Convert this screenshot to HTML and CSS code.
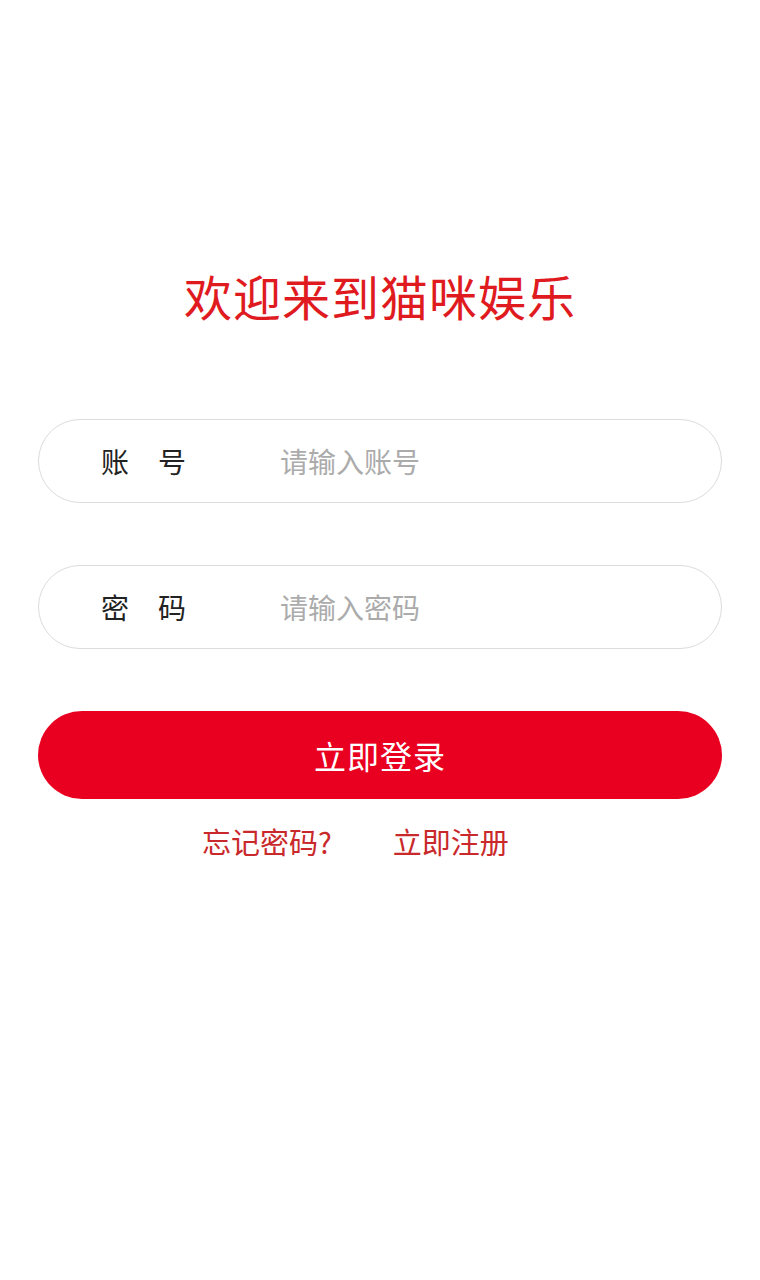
FILE: index.html
```html
<!DOCTYPE html>
<html lang="zh-CN">
<head>
<meta charset="utf-8">
<title>欢迎来到猫咪娱乐</title>
<link rel="stylesheet" href="styles.css">
</head>
<body>
<main class="page">
  <h1 class="title">欢迎来到猫咪娱乐</h1>
  <form class="form">
    <label class="field">
      <span class="label"><span>账</span><span>号</span></span>
      <input class="input" type="text" placeholder="请输入账号">
    </label>
    <label class="field">
      <span class="label"><span>密</span><span>码</span></span>
      <input class="input" type="password" placeholder="请输入密码">
    </label>
    <button class="submit" type="button">立即登录</button>
  </form>
  <div class="links">
    <a class="link" href="#">忘记密码?</a>
    <a class="link" href="#">立即注册</a>
  </div>
</main>
</body>
</html>
```

FILE: styles.css
```css
html, body {
  margin: 0;
  padding: 0;
  background: #ffffff;
}
body {
  font-family: "Noto Sans CJK SC", "Noto Sans", sans-serif;
}
.page {
  padding: 265px 38px 0 38px;
}
.title {
  margin: 0;
  text-align: center;
  font-size: 48px;
  line-height: 60px;
  font-weight: 400;
  color: #e01b1f;
  letter-spacing: 1px;
}
.form {
  margin-top: 94px;
  display: flex;
  flex-direction: column;
  gap: 62px;
}
.field {
  box-sizing: border-box;
  height: 84px;
  border: 1.5px solid #dcdcdc;
  border-radius: 42px;
  display: flex;
  align-items: center;
  padding-left: 62px;
}
.label {
  display: flex;
  justify-content: space-between;
  width: 85px;
  font-size: 28px;
  color: #222222;
  line-height: 40px;
}
.input {
  margin-left: 94px;
  flex: 1;
  border: none;
  outline: none;
  background: transparent;
  font-family: inherit;
  font-size: 28px;
  color: #222222;
  padding: 0;
  line-height: 40px;
}
.input::placeholder {
  color: #ababab;
}
.submit {
  height: 88px;
  border: none;
  border-radius: 44px;
  background: #e90020;
  color: #ffffff;
  font-family: inherit;
  font-size: 32px;
  letter-spacing: 1px;
  cursor: pointer;
}
.links {
  margin-top: 22px;
  display: flex;
  gap: 61px;
  padding-left: 164px;
}
.link {
  font-size: 29px;
  line-height: 40px;
  color: #c9292b;
  text-decoration: none;
}
```
